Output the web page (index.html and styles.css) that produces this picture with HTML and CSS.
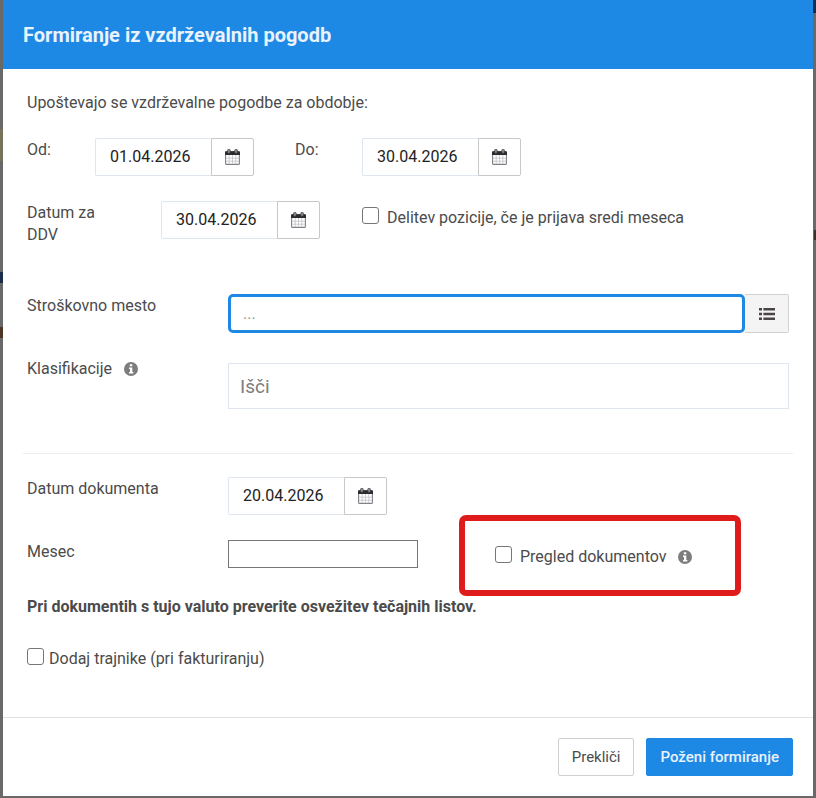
FILE: index.html
```html
<!DOCTYPE html>
<html lang="sl">
<head>
<meta charset="utf-8">
<meta name="viewport" content="width=device-width, initial-scale=1">
<title>Formiranje iz vzdrževalnih pogodb</title>
<link rel="stylesheet" href="styles.css">
</head>
<body>
<svg class="sprite" aria-hidden="true">
  <symbol id="calendar" viewBox="0 0 15 16">
    <rect x=".6" y="2.6" width="13.8" height="12.8" rx="1" fill="#fff" stroke="#808086" stroke-width="1.1"/>
    <path d="M4.2 6v9M7.5 6v9M10.8 6v9M1 9.2h13M1 12.2h13" stroke="#c6c6cc" stroke-width=".9" fill="none"/>
    <path d="M0 6V3.4Q0 2.2 1.2 2.2h12.6Q15 2.2 15 3.4V6z" fill="#2b2b2e"/>
    <rect x="2.6" y=".3" width="2.6" height="4" rx="1" fill="#8c8c90" stroke="#3c3c40" stroke-width=".7"/>
    <rect x="9.8" y=".3" width="2.6" height="4" rx="1" fill="#8c8c90" stroke="#3c3c40" stroke-width=".7"/>
  </symbol>
  <symbol id="info" viewBox="0 0 14 14">
    <circle cx="7" cy="7" r="7" fill="#7d7d7d"/>
    <path d="M5.8 2.2h2.5v2H5.8zM5 5.4h3.3v4.7h1v1.5H5v-1.5h1V6.9H5z" fill="#fff"/>
  </symbol>
  <symbol id="list" viewBox="0 0 16 12">
    <path d="M0 0h3v2.6H0zM0 4.7h3v2.6H0zM0 9.4h3V12H0zM4.4 0H16v2.4H4.4zM4.4 4.8H16v2.4H4.4zM4.4 9.6H16V12H4.4z" fill="#4a4448"/>
  </symbol>
</svg>

<form class="modal">
  <header class="modal-header">
    <h1>Formiranje iz vzdrževalnih pogodb</h1>
  </header>

  <div class="modal-body">
    <p class="intro">Upoštevajo se vzdrževalne pogodbe za obdobje:</p>

    <div class="row row-period">
      <label for="od">Od:</label>
      <div class="date">
        <input id="od" type="text" value="01.04.2026">
        <button type="button" aria-label="Koledar"><svg class="icon-calendar"><use href="#calendar"/></svg></button>
      </div>
      <label for="do">Do:</label>
      <div class="date">
        <input id="do" type="text" value="30.04.2026">
        <button type="button" aria-label="Koledar"><svg class="icon-calendar"><use href="#calendar"/></svg></button>
      </div>
    </div>

    <div class="row row-vat">
      <label class="label-vat" for="ddv">Datum za DDV</label>
      <div class="date">
        <input id="ddv" type="text" value="30.04.2026">
        <button type="button" aria-label="Koledar"><svg class="icon-calendar"><use href="#calendar"/></svg></button>
      </div>
      <div class="check">
        <input id="delitev" type="checkbox">
        <label for="delitev">Delitev pozicije, če je prijava sredi meseca</label>
      </div>
    </div>

    <div class="row row-field row-cost">
      <label for="mesto">Stroškovno mesto</label>
      <div class="lookup">
        <input id="mesto" type="text" placeholder="...">
        <button type="button" aria-label="Seznam"><svg class="icon-list"><use href="#list"/></svg></button>
      </div>
    </div>

    <div class="row row-field">
      <label class="with-info" for="klas">Klasifikacije <svg class="icon-info"><use href="#info"/></svg></label>
      <input class="search" id="klas" type="text" placeholder="Išči">
    </div>

    <hr>

    <div class="row row-field">
      <label for="datum">Datum dokumenta</label>
      <div class="date">
        <input id="datum" type="text" value="20.04.2026">
        <button type="button" aria-label="Koledar"><svg class="icon-calendar"><use href="#calendar"/></svg></button>
      </div>
    </div>

    <div class="row row-month">
      <label for="mesec">Mesec</label>
      <input class="month" id="mesec" type="text">
      <div class="check highlighted">
        <input id="pregled" type="checkbox">
        <label class="with-info" for="pregled">Pregled dokumentov <svg class="icon-info"><use href="#info"/></svg></label>
      </div>
    </div>

    <p class="notice">Pri dokumentih s tujo valuto preverite osvežitev tečajnih listov.</p>

    <div class="check check-tight">
      <input id="trajniki" type="checkbox">
      <label for="trajniki">Dodaj trajnike (pri fakturiranju)</label>
    </div>
  </div>

  <footer class="modal-footer">
    <button class="btn" type="button">Prekliči</button>
    <button class="btn btn-primary" type="submit">Poženi formiranje</button>
  </footer>
</form>
</body>
</html>
```
FILE: styles.css
```css
*,
*::before {
  box-sizing: border-box;
}

body {
  margin: 0;
  min-height: 100vh;
  padding: 0 3px 2px;
  background:
    linear-gradient(#06305a, #06305a) right 0 top 0 / 3px 13px no-repeat,
    linear-gradient(#3a3028, #3a3028) right 0 top 230px / 2px 10px no-repeat,
    linear-gradient(#77735a, #77735a) left 0 top 129px / 3px 32px no-repeat,
    linear-gradient(#1c2c4c, #1c2c4c) left 0 top 272px / 3px 11px no-repeat,
    linear-gradient(#4c3426, #4c3426) left 0 top 327px / 3px 11px no-repeat,
    #696969;
  color: #4b4b4b;
  font: 16px/22px Roboto, "Liberation Sans", sans-serif;
}

input,
button {
  font: inherit;
  margin: 0;
}

.sprite {
  position: absolute;
  width: 0;
  height: 0;
}

.modal {
  background: #fff;
}

.modal-header {
  padding: 23px 20px 22px;
  background: #1e88e5;
  color: #e8f3fd;
}

.modal-header h1 {
  margin: 0;
  font-size: 20px;
  line-height: 24px;
  font-weight: 700;
}

.modal-body {
  padding: 23px 24px 47px;
}

.intro,
.notice {
  margin: 0;
}

.intro {
  margin-bottom: 24px;
}

.row {
  display: grid;
  align-items: start;
  margin-bottom: 25px;
}

.row > label {
  padding-top: 1px;
}

.row-period {
  grid-template-columns: 68px 200px 67px 1fr;
}

.row-vat {
  grid-template-columns: 134px 201px 1fr;
  margin-bottom: 48px;
}

.row > .label-vat {
  padding-right: 48px;
}

.row-field {
  grid-template-columns: 201px 1fr;
}

.row-month {
  grid-template-columns: 201px 267px 1fr;
  margin-bottom: 28px;
}

.date {
  display: flex;
  width: 159px;
  height: 38px;
}

.date input {
  flex: 1;
  min-width: 0;
  padding: 0 14px;
  border: 1px solid #dfe6f0;
  border-right: 0;
  border-radius: 2px 0 0 2px;
  color: #222;
}

.date button {
  display: grid;
  place-items: center;
  width: 43px;
  padding: 0;
  border: 1px solid #c8c8c8;
  border-radius: 0 2px 2px 0;
  background: #fff;
}

.icon-calendar {
  width: 15px;
  height: 16px;
}

.icon-info {
  width: 14px;
  height: 14px;
}

.icon-list {
  width: 16px;
  height: 12px;
}

.with-info {
  display: flex;
  align-items: center;
  gap: 12px;
}

.check {
  display: flex;
  align-items: flex-start;
  gap: 8px;
  padding-top: 6px;
}

.check input {
  appearance: none;
  width: 17px;
  height: 17px;
  border: 1px solid #767676;
  border-radius: 3px;
  background: #fff;
}

.check-tight {
  gap: 5px;
  padding-top: 0;
}

.lookup {
  display: flex;
  height: 39px;
}

.lookup input {
  flex: 1;
  min-width: 0;
  padding: 0 12px;
  border: 3px solid #1e88e5;
  border-radius: 5px;
  outline: 0;
}

.lookup button {
  display: grid;
  place-items: center;
  width: 44px;
  padding: 0;
  border: 1px solid #d2d2d2;
  border-left: 0;
  border-radius: 0 2px 2px 0;
  background: #f4f4f4;
}

.lookup input::placeholder {
  color: #999;
}

.row-cost {
  margin-bottom: 24px;
}

.search {
  width: 100%;
  height: 46px;
  margin-top: 6px;
  padding: 0 11px;
  border: 1px solid #dfe6f0;
  font-size: 19px;
}

.search::placeholder {
  color: #7d7d7d;
}

hr {
  height: 1px;
  margin: 44px -4px 23px;
  border: 0;
  background: #ececec;
}

.month {
  width: 190px;
  height: 28px;
  border: 1px solid #767676;
}

.highlighted {
  position: relative;
}

.highlighted::before {
  content: "";
  position: absolute;
  top: -25px;
  left: -36px;
  width: 282px;
  height: 81px;
  border: 6px solid #e01b1b;
  border-radius: 7px;
  pointer-events: none;
}

.notice {
  margin-bottom: 30px;
  font-weight: 700;
}

.modal-footer {
  display: flex;
  justify-content: flex-end;
  gap: 12px;
  padding: 20px;
  border-top: 1px solid #e2e2e2;
}

.btn {
  height: 38px;
  padding: 0 13px;
  border: 1px solid #cfcfcf;
  border-radius: 2px;
  background: #fff;
  color: #4b4b4b;
  font-size: 15px;
}

.btn-primary {
  border-color: #1e88e5;
  background: #1e88e5;
  color: #e8f3fd;
  font-weight: 500;
}
```
